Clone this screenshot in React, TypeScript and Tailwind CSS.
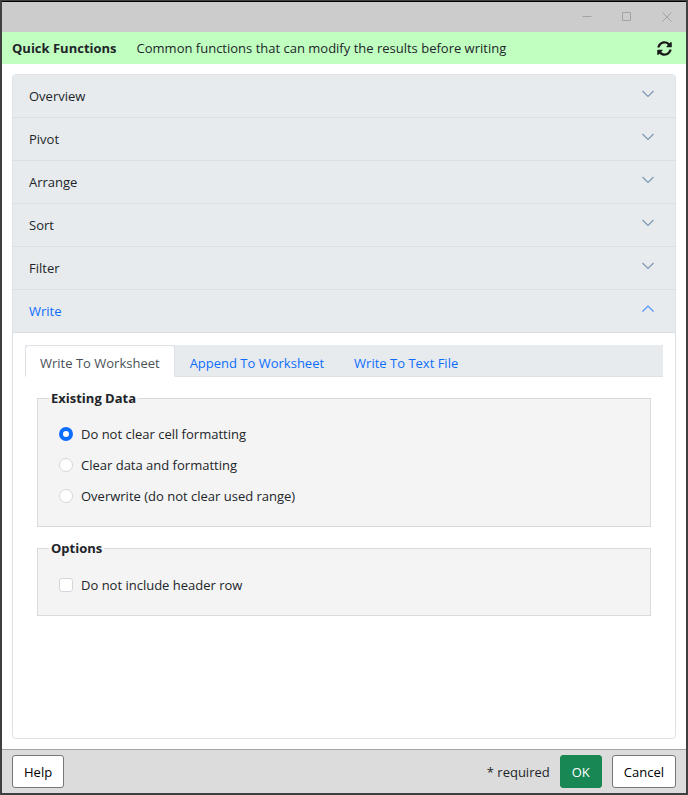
import { FaSyncAlt } from "react-icons/fa";

type SectionTypes = {
  name: string;
  open?: boolean;
};

const SECTIONS: SectionTypes[] = [
  { name: "Overview" },
  { name: "Pivot" },
  { name: "Arrange" },
  { name: "Sort" },
  { name: "Filter" },
  { name: "Write", open: true },
];

const EXISTING_DATA: string[] = [
  "Do not clear cell formatting",
  "Clear data and formatting",
  "Overwrite (do not clear used range)",
];

const fieldsetStyle =
  "border border-[#d9dadb] bg-[#f4f4f4] pl-[11px] pr-3 pb-[19px]";
const legendStyle = "px-[2px] font-bold";
const labelStyle = "flex items-center gap-2";
const boxStyle =
  "h-[14px] w-[14px] appearance-none border border-[#d3d7dc] bg-white checked:border-4 checked:border-[#0d6efd]";
const tabStyle = "h-8 rounded-t border px-[14px] pt-1";
const buttonStyle = "h-[33px] rounded-[3px] border px-[11px]";

const Chevron = ({ open }: { open?: boolean }) => (
  <svg
    className={open ? "mb-1 text-[#4f93fb]" : "mb-1 text-[#7f99b3]"}
    width="14"
    height="8"
    viewBox="0 0 14 8"
    fill="none"
    stroke="currentColor"
    strokeWidth="1.2"
  >
    <path d={open ? "M1.5 6.5 7 1l5.5 5.5" : "M1.5 1 7 6.5 12.5 1"} />
  </svg>
);

const TitleBar = () => {
  return (
    <div className="flex h-[31px] items-center justify-end gap-[30px] border-t border-black bg-[#ccc] pr-[14px] text-[#a3a3a3]">
      <button aria-label="Minimize">
        <svg width="10" height="10" stroke="currentColor" fill="none">
          <path d="M.5 4.5h9" />
        </svg>
      </button>
      <button aria-label="Maximize">
        <svg width="10" height="10" stroke="currentColor" fill="none">
          <path d="M.5.5h8v8h-8z" />
        </svg>
      </button>
      <button aria-label="Close">
        <svg width="10" height="10" stroke="currentColor" fill="none">
          <path d="M.5.5l9 9M9.5.5l-9 9" />
        </svg>
      </button>
    </div>
  );
};

const WritePanel = () => {
  return (
    <div className="p-3">
      <div role="tablist" className="flex bg-[#e7ebee] shadow-[inset_0_-1px_0_#dee2e6]">
        <button
          role="tab"
          aria-selected="true"
          className={`${tabStyle} border-[#dee2e6] border-b-white bg-white text-[#495057]`}
        >
          Write To Worksheet
        </button>
        <button
          role="tab"
          aria-selected="false"
          className={`${tabStyle} border-transparent text-[#0d6efd]`}
        >
          Append To Worksheet
        </button>
        <button
          role="tab"
          aria-selected="false"
          className={`${tabStyle} border-transparent text-[#0d6efd]`}
        >
          Write To Text File
        </button>
      </div>
      <form className="flex flex-col gap-[10px] px-3 pt-[10px]">
        <fieldset className={fieldsetStyle}>
          <legend className={legendStyle}>Existing Data</legend>
          <div className="flex flex-col items-start gap-[9px] pl-[10px] pt-[14px]">
            {EXISTING_DATA.map((text, i) => (
              <label key={text} className={labelStyle}>
                <input
                  type="radio"
                  name="existing"
                  defaultChecked={i === 0}
                  className={`${boxStyle} rounded-full`}
                />
                {text}
              </label>
            ))}
          </div>
        </fieldset>
        <fieldset className={fieldsetStyle}>
          <legend className={legendStyle}>Options</legend>
          <div className="flex flex-col items-start pl-[10px] pt-[15px]">
            <label className={labelStyle}>
              <input type="checkbox" className={`${boxStyle} rounded-[3px]`} />
              Do not include header row
            </label>
          </div>
        </fieldset>
      </form>
    </div>
  );
};

const App = () => {
  return (
    <div className="flex min-h-screen flex-col border-2 border-t border-[#404040] bg-white font-['Open_Sans','Noto_Sans',sans-serif] text-[13px] leading-[22px] text-[#212529]">
      <TitleBar />
      <header className="flex h-8 items-center gap-5 bg-[#c1ffc1] pl-[10px] pr-[14px]">
        <h1 className="font-bold">Quick Functions</h1>
        <p>Common functions that can modify the results before writing</p>
        <button aria-label="Refresh" className="ml-auto text-[#1a1a1a]">
          <FaSyncAlt size={15} />
        </button>
      </header>
      <main className="m-[10px] flex-1 overflow-hidden rounded border border-[#dee2e6]">
        {SECTIONS.map((section) => (
          <h2 key={section.name} className="border-b border-[#dadfe3] bg-[#e7ebee]">
            <button
              aria-expanded={!!section.open}
              className={`flex h-[42px] w-full items-center justify-between pl-4 pr-5 ${
                section.open ? "text-[#0d6efd]" : ""
              }`}
            >
              {section.name}
              <Chevron open={section.open} />
            </button>
          </h2>
        ))}
        <WritePanel />
      </main>
      <footer className="flex items-center gap-[10px] border-t border-[#a3a8a3] bg-[#dcdcdc] px-[10px] py-[5px]">
        <button className={`${buttonStyle} border-[#777] bg-white text-black`}>
          Help
        </button>
        <span className="ml-auto">* required</span>
        <button className={`${buttonStyle} border-[#198754] bg-[#198754] text-white`}>
          OK
        </button>
        <button className={`${buttonStyle} border-[#777] bg-white text-black`}>
          Cancel
        </button>
      </footer>
    </div>
  );
};

export default App;
